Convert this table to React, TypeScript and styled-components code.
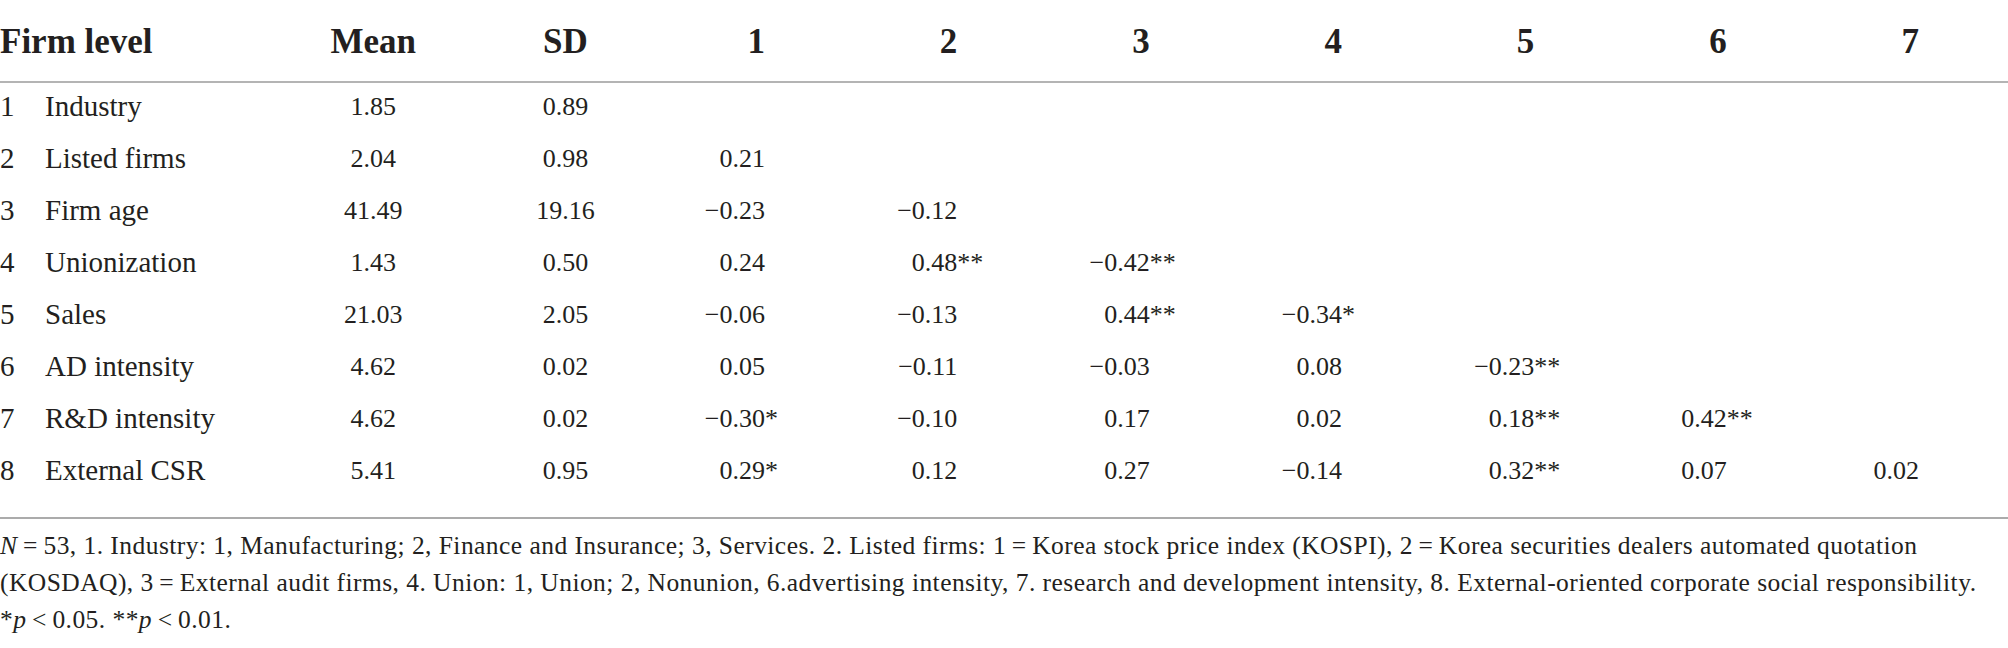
import React from "react";
import styled, { createGlobalStyle } from "styled-components";

const GlobalStyle = createGlobalStyle`
  html, body {
    margin: 0;
    padding: 0;
    background: #ffffff;
  }
  body {
    font-family: "Liberation Serif", "Times New Roman", serif;
    color: #231f20;
  }
`;

const COLS = "277px repeat(9, minmax(0, 1fr))";

type Align = "left" | "center" | "right";

const Page = styled.div`
  width: 2008px;
  overflow: hidden;
`;

const Table = styled.div`
  display: flex;
  flex-direction: column;
`;

const HeadRow = styled.div`
  display: grid;
  grid-template-columns: ${COLS};
  align-items: start;
  height: 40px;
  padding: 22px 0 19px;
  border-bottom: 2px solid #b4b4b4;
`;

const HeadCell = styled.div<{ $align: Align }>`
  font-size: 35px;
  line-height: 40px;
  font-weight: 700;
  white-space: nowrap;
  text-align: ${(p) => p.$align};
  padding-right: ${(p) => (p.$align === "right" ? "89px" : "0")};
`;

const Body = styled.div`
  padding-bottom: 18px;
  border-bottom: 2px solid #ababab;
`;

const BodyRow = styled.div`
  display: grid;
  grid-template-columns: ${COLS};
  align-items: start;
  height: 52px;
  overflow: visible;
`;

const LabelCell = styled.div`
  display: flex;
  align-items: baseline;
  font-size: 29px;
  line-height: 46px;
  white-space: nowrap;
`;

const RowNum = styled.span`
  width: 45px;
  flex: none;
`;

const NumCell = styled.div<{ $align: Align }>`
  font-size: 26px;
  line-height: 46px;
  padding-top: 1px;
  white-space: nowrap;
  text-align: ${(p) => p.$align};
  padding-right: ${(p) => (p.$align === "right" ? "89px" : "0")};
`;

const Stars = styled.span`
  display: inline-block;
  width: 0;
  line-height: 1;
  overflow: visible;
  white-space: nowrap;
  text-align: left;
`;

const Footnote = styled.div`
  padding-top: 8px;
  font-size: 25.5px;
  letter-spacing: 0.45px;
  line-height: 37px;
`;

const FootLine = styled.div`
  white-space: nowrap;
`;

const It = styled.i`
  font-style: italic;
`;

type Row = {
  n: number;
  name: string;
  mean: string;
  sd: string;
  r: string[];
};

const rows: Row[] = [
  { n: 1, name: "Industry", mean: "1.85", sd: "0.89", r: [] },
  { n: 2, name: "Listed firms", mean: "2.04", sd: "0.98", r: ["0.21"] },
  { n: 3, name: "Firm age", mean: "41.49", sd: "19.16", r: ["−0.23", "−0.12"] },
  { n: 4, name: "Unionization", mean: "1.43", sd: "0.50", r: ["0.24", "0.48**", "−0.42**"] },
  { n: 5, name: "Sales", mean: "21.03", sd: "2.05", r: ["−0.06", "−0.13", "0.44**", "−0.34*"] },
  { n: 6, name: "AD intensity", mean: "4.62", sd: "0.02", r: ["0.05", "−0.11", "−0.03", "0.08", "−0.23**"] },
  { n: 7, name: "R&D intensity", mean: "4.62", sd: "0.02", r: ["−0.30*", "−0.10", "0.17", "0.02", "0.18**", "0.42**"] },
  { n: 8, name: "External CSR", mean: "5.41", sd: "0.95", r: ["0.29*", "0.12", "0.27", "−0.14", "0.32**", "0.07", "0.02"] },
];

const Corr: React.FC<{ value?: string }> = ({ value }) => {
  if (!value) return <NumCell $align="right" />;
  const m = value.match(/^([^*]+)(\*+)?$/);
  const num = m ? m[1] : value;
  const stars = m && m[2] ? m[2] : "";
  return (
    <NumCell $align="right">
      {num}
      <Stars>{stars}</Stars>
    </NumCell>
  );
};

const T = "\u2009";

export default function App() {
  return (
    <Page>
      <GlobalStyle />
      <Table>
        <HeadRow>
          <HeadCell $align="left">Firm level</HeadCell>
          <HeadCell $align="center">Mean</HeadCell>
          <HeadCell $align="center">SD</HeadCell>
          {[1, 2, 3, 4, 5, 6, 7].map((k) => (
            <HeadCell key={k} $align="right">
              {k}
            </HeadCell>
          ))}
        </HeadRow>
        <Body>
          {rows.map((row) => (
            <BodyRow key={row.n}>
              <LabelCell>
                <RowNum>{row.n}</RowNum>
                {row.name}
              </LabelCell>
              <NumCell $align="center">{row.mean}</NumCell>
              <NumCell $align="center">{row.sd}</NumCell>
              {Array.from({ length: 7 }).map((_, i) => (
                <Corr key={i} value={row.r[i]} />
              ))}
            </BodyRow>
          ))}
        </Body>
      </Table>
      <Footnote>
        <FootLine>
          <It>N</It>
          {T}={T}53, 1. Industry: 1, Manufacturing; 2, Finance and Insurance; 3, Services. 2. Listed firms: 1{T}={T}Korea stock
          price index (KOSPI), 2{T}={T}Korea securities dealers automated quotation
        </FootLine>
        <FootLine>
          (KOSDAQ), 3{T}={T}External audit firms, 4. Union: 1, Union; 2, Nonunion, 6.advertising intensity, 7. research and
          development intensity, 8. External-oriented corporate social responsibility.
        </FootLine>
        <FootLine>
          *<It>p</It>
          {T}&lt;{T}0.05. **<It>p</It>
          {T}&lt;{T}0.01.
        </FootLine>
      </Footnote>
    </Page>
  );
}
